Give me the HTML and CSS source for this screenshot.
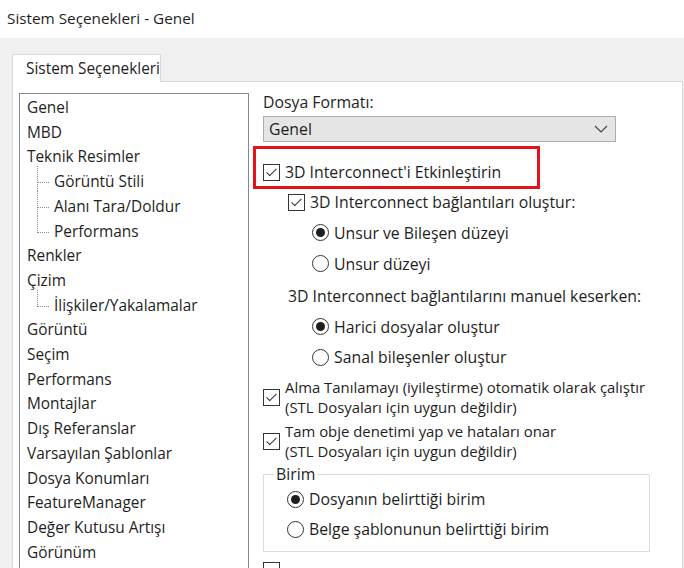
FILE: index.html
```html
<!DOCTYPE html>
<html lang="tr">
<head>
    <meta charset="UTF-8">
    <title>Sistem Seçenekleri - Genel</title>
    <link rel="stylesheet" href="styles.css">
</head>
<body>
    <div class="titlebar">Sistem Seçenekleri - Genel</div>

    <div class="window">
        <div class="tabs">
            <div class="tab">Sistem Seçenekleri</div>
        </div>

        <div class="panel">
            <ul class="tree">
                <li>Genel</li>
                <li>MBD</li>
                <li>Teknik Resimler
                    <ul>
                        <li>Görüntü Stili</li>
                        <li>Alanı Tara/Doldur</li>
                        <li>Performans</li>
                    </ul>
                </li>
                <li>Renkler</li>
                <li>Çizim
                    <ul>
                        <li>İlişkiler/Yakalamalar</li>
                    </ul>
                </li>
                <li>Görüntü</li>
                <li>Seçim</li>
                <li>Performans</li>
                <li>Montajlar</li>
                <li>Dış Referanslar</li>
                <li>Varsayılan Şablonlar</li>
                <li>Dosya Konumları</li>
                <li>FeatureManager</li>
                <li>Değer Kutusu Artışı</li>
                <li>Görünüm</li>
            </ul>

            <div class="options">
                <div class="field-label">Dosya Formatı:</div>
                <div class="select">
                    <span>Genel</span>
                    <svg width="14" height="8" viewBox="0 0 14 8"><polyline points="1,1 7,7 13,1" fill="none" stroke="#444" stroke-width="1.2"/></svg>
                </div>

                <div class="highlight">
                    <label class="opt"><span class="check on"></span>3D Interconnect'i Etkinleştirin</label>
                </div>

                <label class="opt row-check2 indent1"><span class="check on"></span>3D Interconnect bağlantıları oluştur:</label>
                <label class="opt row indent2"><span class="radio on"></span>Unsur ve Bileşen düzeyi</label>
                <label class="opt row indent2"><span class="radio"></span>Unsur düzeyi</label>
                <div class="opt row-label indent1">3D Interconnect bağlantılarını manuel keserken:</div>
                <label class="opt row indent2"><span class="radio on"></span>Harici dosyalar oluştur</label>
                <label class="opt row last indent2"><span class="radio"></span>Sanal bileşenler oluştur</label>

                <label class="opt multi first"><span class="check on"></span><span>Alma Tanılamayı (iyileştirme) otomatik olarak çalıştır<br>(STL Dosyaları için uygun değildir)</span></label>
                <label class="opt multi"><span class="check on"></span><span>Tam obje denetimi yap ve hataları onar<br>(STL Dosyaları için uygun değildir)</span></label>

                <fieldset class="group">
                    <legend>Birim</legend>
                    <label class="opt grow"><span class="radio on"></span>Dosyanın belirttiği birim</label>
                    <label class="opt grow"><span class="radio"></span>Belge şablonunun belirttiği birim</label>
                </fieldset>

                <div class="opt"><span class="check"></span></div>
            </div>
        </div>
    </div>
</body>
</html>
```

FILE: styles.css
```css
html, body {
    margin: 0;
    height: 568px;
    overflow: hidden;
}
body {
    font-family: "Open Sans", "Noto Sans", sans-serif;
    font-size: 15.4px;
    color: #1e1e1e;
    background: #fff;
}
.titlebar {
    height: 38px;
    line-height: 36px;
    padding-left: 7px;
    font-size: 15.3px;
}
.window {
    background: #f0f0f0;
    padding: 16px 1px 0 12px;
}
.tabs {
    display: flex;
}
.tab {
    width: 149px;
    height: 28px;
    box-sizing: border-box;
    padding-left: 13px;
    line-height: 27px;
    background: #fff;
    border: 1px solid #d9d9d9;
    border-bottom: none;
    position: relative;
    z-index: 1;
}
.panel {
    background: #fff;
    border: 1px solid #d9d9d9;
    margin-top: -1px;
    height: 520px;
    display: flex;
    align-items: flex-start;
    padding: 11px 0 0 6px;
}

/* tree */
.tree {
    list-style: none;
    margin: 0;
    padding: 2px 0 0 7px;
    width: 221px;
    height: 480px;
    border: 1px solid #828790;
    flex-shrink: 0;
}
.tree li {
    line-height: 24.7px;
    white-space: nowrap;
}
.tree ul {
    list-style: none;
    margin: 0;
    padding: 0 0 0 27px;
}
.tree ul li {
    position: relative;
}
.tree ul li::before {
    content: "";
    position: absolute;
    left: -17px;
    top: -4px;
    height: 100%;
    border-left: 1px dotted #8c8c8c;
}
.tree ul li:last-child::before {
    height: 17px;
}
.tree ul li::after {
    content: "";
    position: absolute;
    left: -16px;
    top: 12px;
    width: 11px;
    border-top: 1px dotted #8c8c8c;
}

/* options */
.options {
    margin-left: 14px;
    display: flex;
    flex-direction: column;
    font-size: 15.8px;
}
.field-label {
    line-height: 19px;
    height: 23px;
}
.select {
    width: 353px;
    height: 26px;
    box-sizing: border-box;
    background: #e5e5e5;
    border: 1px solid #adadad;
    display: flex;
    align-items: center;
    justify-content: space-between;
    padding: 0 7px 0 5px;
}
.highlight {
    margin: 4px 0 0 -10px;
    width: 287px;
    height: 43px;
    box-sizing: border-box;
    border: 3px solid #e3121b;
    padding: 8px 0 0 7px;
}
.highlight .opt {
    height: 30px;
}
.opt {
    display: flex;
    align-items: center;
    gap: 5px;
    white-space: nowrap;
}
.indent1 {
    padding-left: 25px;
}
.indent2 {
    padding-left: 49px;
}
.row-check2 {
    height: 22px;
    margin-bottom: 4px;
    padding-top: 2px;
}
.row {
    height: 31px;
}
.row.last {
    height: 30px;
}
.row-label {
    height: 30px;
    margin-top: 2px;
}
.multi {
    font-size: 14.9px;
    line-height: 20px;
    margin-top: 4px;
}
.multi.first {
    margin-top: 5px;
}
.check {
    width: 17px;
    height: 17px;
    box-sizing: border-box;
    border: 1px solid #333;
    background: #fff;
    flex-shrink: 0;
    position: relative;
}
.check.on::after {
    content: "";
    position: absolute;
    left: 5px;
    top: 1px;
    width: 4px;
    height: 9px;
    border: solid #333;
    border-width: 0 1.3px 1.3px 0;
    transform: rotate(45deg);
}
.radio {
    width: 17px;
    height: 17px;
    box-sizing: border-box;
    border: 1px solid #333;
    border-radius: 50%;
    background: #fff;
    flex-shrink: 0;
    position: relative;
}
.radio.on::after {
    content: "";
    position: absolute;
    left: 3px;
    top: 3px;
    width: 9px;
    height: 9px;
    border-radius: 50%;
    background: #1e1e1e;
}
.group {
    margin: 3px 0 0 0;
    width: 387px;
    height: 88px;
    box-sizing: border-box;
    border: 1px solid #dcdcdc;
    padding: 0 0 0 23px;
}
.group legend {
    padding: 0 2px;
    margin-left: -13px;
    line-height: 20px;
}
.grow {
    height: 30px;
}
.options > .opt:last-child {
    margin-top: 10px;
}
```
